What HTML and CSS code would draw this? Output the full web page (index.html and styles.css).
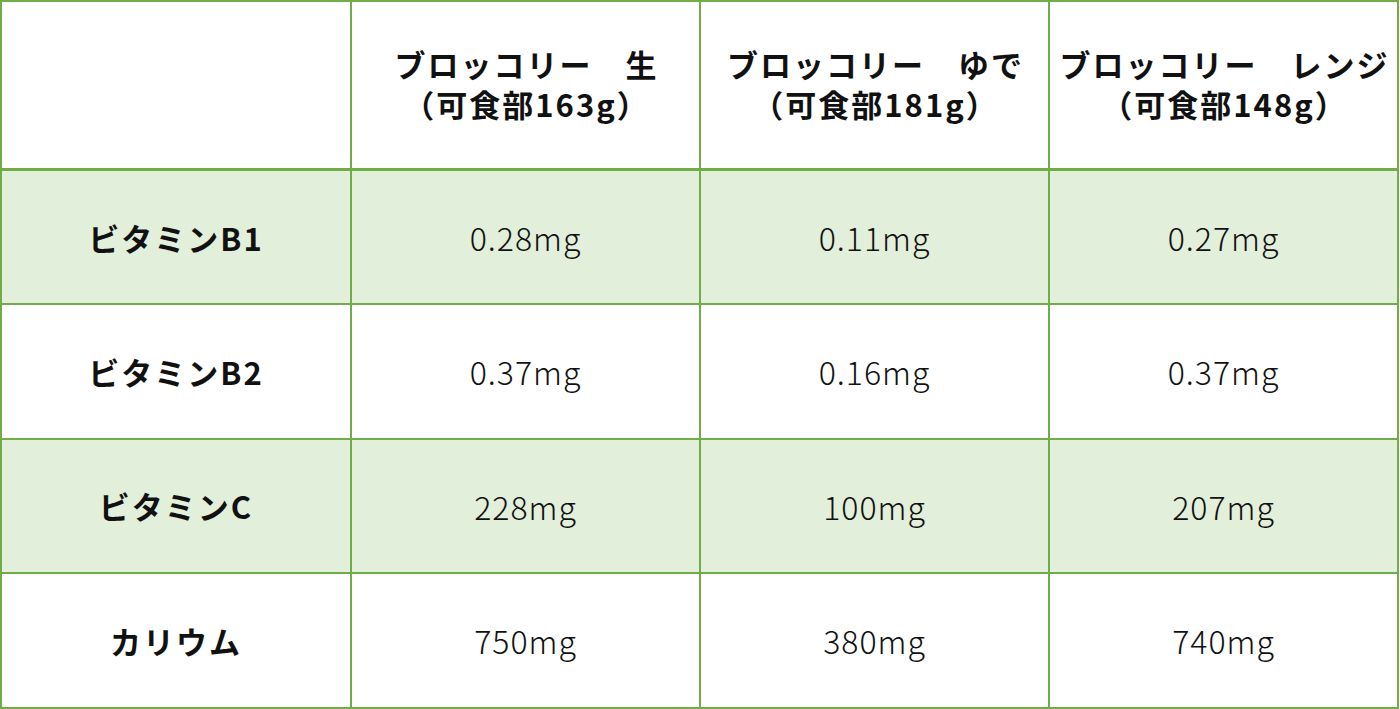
FILE: index.html
```html
<!DOCTYPE html>
<html lang="ja">
<head>
<meta charset="utf-8">
<link rel="stylesheet" href="styles.css">
</head>
<body>
<table class="nutri">
  <colgroup>
    <col class="c-label">
    <col class="c-val">
    <col class="c-val">
    <col class="c-val">
  </colgroup>
  <thead>
    <tr class="head">
      <th></th>
      <th>ブロッコリー　生<br>（可食部163g）</th>
      <th>ブロッコリー　ゆで<br>（可食部181g）</th>
      <th>ブロッコリー　レンジ<br>（可食部148g）</th>
    </tr>
  </thead>
  <tbody>
    <tr class="shade">
      <th>ビタミンB1</th><td>0.28mg</td><td>0.11mg</td><td>0.27mg</td>
    </tr>
    <tr>
      <th>ビタミンB2</th><td>0.37mg</td><td>0.16mg</td><td>0.37mg</td>
    </tr>
    <tr class="shade">
      <th>ビタミンC</th><td>228mg</td><td>100mg</td><td>207mg</td>
    </tr>
    <tr>
      <th>カリウム</th><td>750mg</td><td>380mg</td><td>740mg</td>
    </tr>
  </tbody>
</table>
</body>
</html>
```
FILE: styles.css
```css
html, body {
  margin: 0;
  padding: 0;
  background: #ffffff;
}
body {
  font-family: "Noto Sans CJK JP", "Noto Sans", sans-serif;
  color: #111111;
}
.nutri {
  border-collapse: collapse;
  width: 1398px;
  table-layout: fixed;
}
.c-label { width: 350px; }
.c-val { width: 349px; }
.nutri th, .nutri td {
  border: 2px solid #70ad47;
  text-align: center;
  vertical-align: middle;
  padding: 0;
}
.head th {
  height: 164px;
  border-bottom: 3px solid #70ad47;
  font-weight: 700;
  font-size: 31px;
  line-height: 40px;
  letter-spacing: 2px;
  white-space: nowrap;
  padding: 0 0 2px 2px;
}
.nutri tbody tr {
  height: 134.5px;
}
.nutri tbody th {
  font-weight: 700;
  font-size: 31px;
  letter-spacing: 2px;
}
.nutri tbody td {
  font-weight: 300;
  font-size: 32px;
  letter-spacing: 1px;
}
.shade th, .shade td {
  background: #e2efda;
}
```
